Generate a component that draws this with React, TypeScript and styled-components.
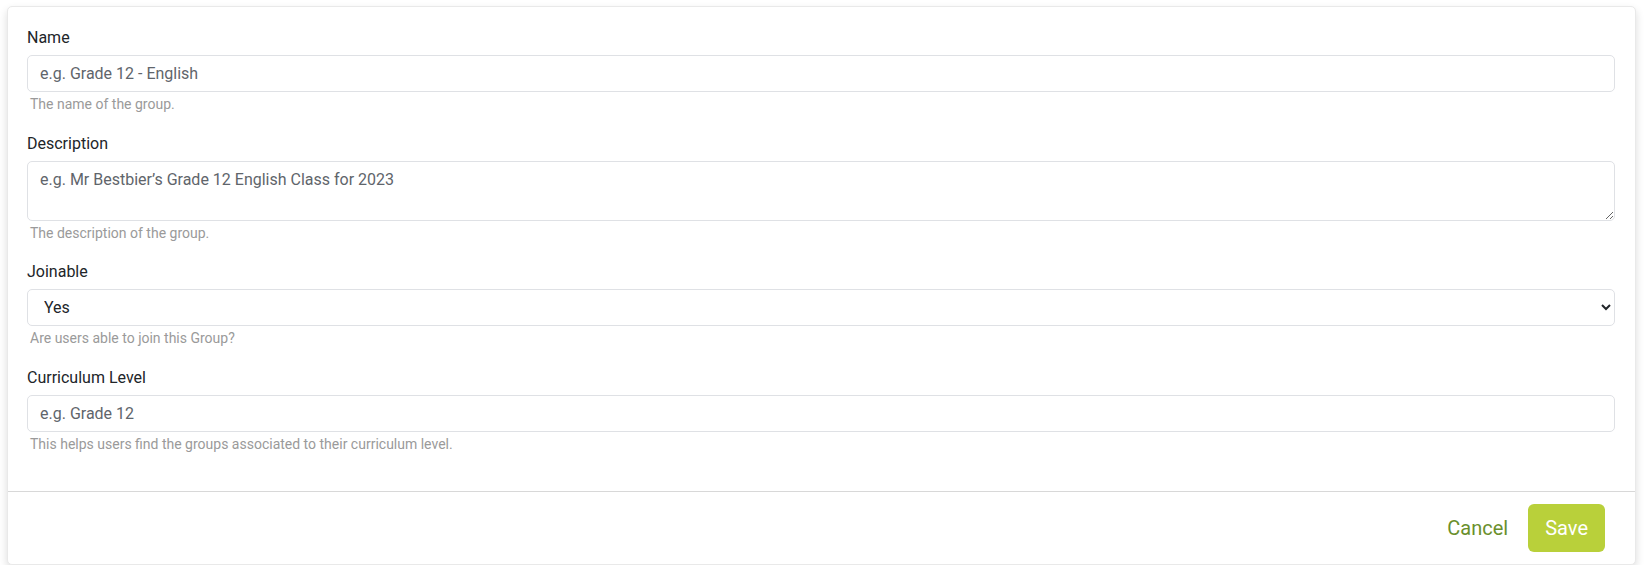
import React from "react";
import styled, { createGlobalStyle } from "styled-components";

const GlobalStyle = createGlobalStyle`
  html, body {
    margin: 0;
    padding: 0;
    background: #ffffff;
    font-family: Roboto, "Liberation Sans", Arial, sans-serif;
  }
  * { box-sizing: border-box; }
`;

const Page = styled.div`
  padding: 6px 9px 0 7px;
`;

const Card = styled.div`
  background: #fff;
  border: 1px solid #e9e9e9;
  border-radius: 5px;
  box-shadow: 0 4px 8px rgba(0, 0, 0, 0.14);
`;

const Body = styled.form`
  padding: 19px 20px 20px 19px;
`;

const Field = styled.div`
  display: flex;
  flex-direction: column;
  margin-bottom: 18.5px;
`;

const Label = styled.label`
  font-size: 16px;
  line-height: 24px;
  color: #212529;
  margin-bottom: 5px;
`;

const controlBase = `
  width: 100%;
  font-family: Roboto, "Liberation Sans", Arial, sans-serif;
  font-size: 16px;
  line-height: 24px;
  color: #212529;
  background-color: #fff;
  border: 1px solid #dfe1e5;
  border-radius: 5px;
  outline: none;
  &::placeholder { color: #5f656b; opacity: 1; }
`;

const Input = styled.input`
  ${controlBase}
  height: 37px;
  padding: 6px 12px;
`;

const TextArea = styled.textarea`
  ${controlBase}
  height: 60px;
  padding: 6px 12px;
  resize: vertical;
  display: block;
`;

const Select = styled.select`
  ${controlBase}
  height: 37px;
  padding: 0 8px 0 12px;
`;

const Help = styled.small`
  font-size: 14px;
  line-height: 18px;
  color: #9a9a9a;
  margin-top: 3px;
  padding-left: 3px;
`;

const Footer = styled.div`
  border-top: 1px solid #d8d8d8;
  display: flex;
  justify-content: flex-end;
  align-items: center;
  gap: 20px;
  padding: 12px 30px 12px 20px;
`;

const TextButton = styled.button`
  background: none;
  border: none;
  padding: 0;
  font-family: Roboto, "Liberation Sans", Arial, sans-serif;
  font-size: 20px;
  color: #6a8f2c;
  cursor: pointer;
`;

const PrimaryButton = styled.button`
  height: 48px;
  padding: 0 17px;
  border: none;
  border-radius: 6px;
  background: #b9d03a;
  color: #fff;
  font-family: Roboto, "Liberation Sans", Arial, sans-serif;
  font-size: 20px;
  cursor: pointer;
`;

export default function App() {
  return (
    <>
      <GlobalStyle />
      <Page>
        <Card>
          <Body onSubmit={(e) => e.preventDefault()}>
            <Field>
              <Label htmlFor="name">Name</Label>
              <Input id="name" placeholder="e.g. Grade 12 - English" />
              <Help>The name of the group.</Help>
            </Field>
            <Field>
              <Label htmlFor="desc">Description</Label>
              <TextArea id="desc" placeholder="e.g. Mr Bestbier’s Grade 12 English Class for 2023" />
              <Help>The description of the group.</Help>
            </Field>
            <Field>
              <Label htmlFor="join">Joinable</Label>
              <Select id="join" defaultValue="yes">
                <option value="yes">Yes</option>
                <option value="no">No</option>
              </Select>
              <Help>Are users able to join this Group?</Help>
            </Field>
            <Field>
              <Label htmlFor="level">Curriculum Level</Label>
              <Input id="level" placeholder="e.g. Grade 12" />
              <Help>This helps users find the groups associated to their curriculum level.</Help>
            </Field>
          </Body>
          <Footer>
            <TextButton type="button">Cancel</TextButton>
            <PrimaryButton type="button">Save</PrimaryButton>
          </Footer>
        </Card>
      </Page>
    </>
  );
}
